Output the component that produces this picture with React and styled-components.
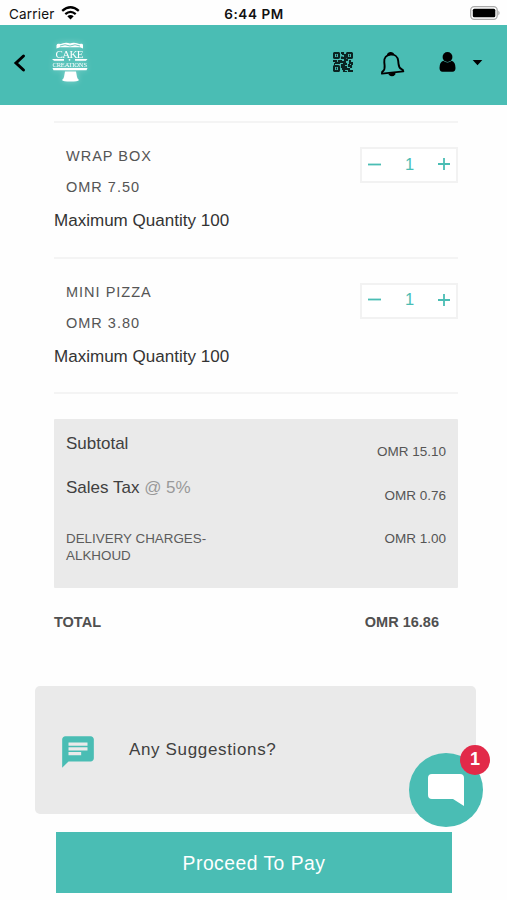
import React, { useState } from 'react'
import styled, { createGlobalStyle } from 'styled-components'
import { MdChat } from 'react-icons/md'

const teal = '#4abdb4'

const GlobalStyle = createGlobalStyle`
*{
  box-sizing:border-box;
}
body{
  margin:0;
  background-color:#fefefe;
  font-family:"Liberation Sans", Arial, sans-serif;
  overflow:hidden;
}
button{
  font-family:inherit;
  border:0;
  padding:0;
  background:none;
}
`
const Screen = styled.div`
display:flex;
flex-direction:column;
width:507px;
height:900px;
overflow:hidden;
`
const StatusBar = styled.div`
display:grid;
grid-template-columns:1fr auto 1fr;
align-items:center;
height:25px;
padding:2px 6px 0 9px;
font-family:Inter, sans-serif;
font-size:13.5px;
color:#111;
`
const Carrier = styled.div`
display:flex;
align-items:center;
gap:6px;
letter-spacing:.2px;
svg{
  margin-top:-2px;
}
`
const Clock = styled.div`
margin-right:2px;
font-weight:600;
letter-spacing:.6px;
`
const Battery = styled.svg`
justify-self:end;
margin-top:-1px;
`
const StyledHeader = styled.header`
display:flex;
align-items:center;
height:80px;
padding:0 24px 4px 13px;
background-color:${teal};
`
const Logo = styled.svg`
margin-left:24px;
margin-right:auto;
overflow:visible;
filter:drop-shadow(0 0 3px rgba(255, 255, 255, .35));
`
const HeaderIcons = styled.div`
display:flex;
align-items:center;
`
const QrIcon = styled.svg`
margin-right:26px;
margin-top:-2px;
`
const BellIcon = styled.svg`
margin-right:34px;
margin-top:3px;
`
const UserIcon = styled.svg`
margin-right:16px;
margin-top:-2px;
`
const Content = styled.main`
width:404px;
margin:16px 0 0 54px;
`
const Item = styled.section`
display:grid;
grid-template-columns:1fr 98px;
height:135.5px;
border-top:2px solid #f4f4f4;
padding-top:24px;
`
const ItemText = styled.div`
display:flex;
flex-direction:column;
margin-top:-1px;
`
const ItemLine = styled.span`
height:31px;
padding-left:12px;
font-size:14.5px;
line-height:20px;
letter-spacing:1px;
color:#555;
`
const MaxQuantity = styled.span`
margin-top:2px;
font-size:17.05px;
line-height:22px;
color:#333;
`
const Stepper = styled.div`
display:flex;
align-items:center;
justify-content:space-between;
height:36px;
padding:0 6px 2px;
border:2px solid #f2f2f2;
background:#fff;
font-size:16.5px;
color:${teal};
button{
  display:flex;
}
`
const Summary = styled.section`
height:195.5px;
padding-top:25px;
border-top:2px solid #f4f4f4;
`
const SummaryBox = styled.div`
height:169px;
padding:14px 12px 0;
background-color:#eaeaea;
border-radius:1px;
`
const SummaryRow = styled.div`
display:flex;
justify-content:space-between;
height:${props => props.$height}px;
`
const Label = styled.span`
font-size:17px;
line-height:22px;
color:#404040;
small{
  font-size:17px;
  color:#999;
}
`
const ChargeLabel = styled.span`
width:150px;
padding-top:9px;
font-size:13.4px;
line-height:17px;
color:#5c5c5c;
`
const Price = styled.span`
padding-top:${props => props.$top}px;
font-size:13.5px;
line-height:17px;
color:#555;
`
const Total = styled.div`
display:flex;
justify-content:space-between;
padding:25px 19px 0 0;
font-size:14.5px;
line-height:18px;
font-weight:bold;
color:#505050;
`
const Suggestions = styled.section`
display:flex;
align-items:center;
width:441px;
height:128px;
margin:55px 0 0 35px;
padding-left:24px;
border-radius:5px;
background-color:#eaeaea;
font-size:17px;
letter-spacing:.65px;
color:#404040;
svg{
  margin-top:5px;
  margin-right:32px;
}
`
const PayButton = styled.button`
flex-shrink:0;
width:396px;
height:61px;
margin:18.5px 0 0 56px;
padding-top:2px;
background-color:${teal};
color:#fff;
font-size:19.3px;
letter-spacing:.5px;
`
const ChatButton = styled.button`
position:absolute;
left:409px;
top:753px;
width:74px;
height:74px;
border-radius:50%;
background-color:${teal};
`
const ChatBadge = styled.span`
position:absolute;
right:-7px;
top:-8px;
width:30px;
height:30px;
border-radius:50%;
background-color:#e22a49;
color:#fff;
font-size:18px;
line-height:29px;
font-weight:bold;
text-align:center;
`

const items = [
  { name: 'WRAP BOX', price: 'OMR 7.50' },
  { name: 'MINI PIZZA', price: 'OMR 3.80' },
]

const CartItem = ({ name, price }) => {
  const [count, setCount] = useState(1)

  return (
    <Item>
      <ItemText>
        <ItemLine>{name}</ItemLine>
        <ItemLine>{price}</ItemLine>
        <MaxQuantity>Maximum Quantity 100</MaxQuantity>
      </ItemText>
      <Stepper>
        <button aria-label="Remove one" onClick={() => setCount(Math.max(0, count - 1))}>
          <svg width="13" height="13" stroke={teal} strokeWidth="1.8">
            <path d="M0 6.5H13" />
          </svg>
        </button>
        <span>{count}</span>
        <button aria-label="Add one" onClick={() => setCount(Math.min(100, count + 1))}>
          <svg width="12" height="12" stroke={teal} strokeWidth="1.8">
            <path d="M0 6H12M6 0V12" />
          </svg>
        </button>
      </Stepper>
    </Item>
  )
}

const CakeLogo = () => (
  <Logo width="38" height="42" viewBox="0 0 38 42" fill="#fff">
    <path d="M5.500 6.500V3.200Q6 1.500 8 1.800Q10 2.200 12 1.300Q15.500 0 19 1.600Q22.500 0 26 1.300Q28 2.200 30 1.800Q32 1.500 32 3.200V6.500L29 5.300H9Z" />
    <path d="M9 4Q14 1.500 19 4Q24 1.500 29 4" fill="none" stroke={teal} strokeWidth=".8" />
    <text x="4.500" y="15.800" fontFamily="Liberation Serif, serif" fontSize="11" textLength="28">CAKE</text>
    <path d="M1 17H13V18.800H3ZM24 17H36.500L35 18.800H24Z" />
    <circle cx="18.500" cy="17.800" r=".9" />
    <text x="1.500" y="25" fontFamily="Liberation Serif, serif" fontSize="6.500" textLength="34.500">CREATIONS</text>
    <path d="M1.500 26H36.500L35.500 28.200H2.500Z" />
    <path d="M14 29.500H25L26 35Q26.500 37 28 38Q27 39.500 19.500 39.500Q12 39.500 11 38Q12.500 37 13 35Z" />
  </Logo>
)

export default function App() {
  return (
    <Screen>
      <GlobalStyle />
      <StatusBar>
        <Carrier>
          Carrier
          <svg width="19" height="14" viewBox="0 0 19 14" fill="none" stroke="#000" strokeWidth="2.300">
            <path d="M1.200 4.900Q9.500 -2.400 17.800 4.900M4.300 8.100Q9.500 3.700 14.700 8.100" />
            <path d="M9.500 13.500L6.300 10.200Q9.500 7.600 12.700 10.200Z" fill="#000" stroke="none" />
          </svg>
        </Carrier>
        <Clock>6:44 PM</Clock>
        <Battery width="31" height="14" viewBox="0 0 31 14">
          <rect x=".7" y=".7" width="26.500" height="12.600" rx="3.500" fill="#fff" stroke="#aaa" strokeWidth="1.300" />
          <rect x="2.800" y="2.700" width="22.500" height="8.600" rx="1.500" />
          <path d="M28.300 4.500Q31 7 28.300 9.500Z" fill="#aaa" />
        </Battery>
      </StatusBar>
      <StyledHeader>
        <svg width="14" height="20" viewBox="0 0 14 20" fill="none" stroke="#000" strokeWidth="3" strokeLinecap="round">
          <path d="M10.500 3L3 10L10.500 17" />
        </svg>
        <CakeLogo />
        <HeaderIcons>
          <QrIcon width="20" height="20" viewBox="0 0 20 20" fill="none" stroke="#0b2422" strokeWidth="2.100">
            <rect x="1" y="1" width="5" height="5" rx=".7" />
            <rect x="14" y="1" width="5" height="5" rx=".7" />
            <rect x="1" y="14" width="5" height="5" rx=".7" />
            <path d="M3 3.500H4M16 3.500H17M3 16.500H4" />
            <path d="M8 1H10V3M12 2V6H9V4.500M0 9H3V11H6V9H8M8 8V10H12V8H15M17 8V11H20M1 12H2M9 12V15H11V12H14M9 17H11V20M13 14V17H16V19H20M16 12V14H18V16M13 19V20M18 12H20" />
          </QrIcon>
          <BellIcon width="26" height="27" viewBox="0 0 26 27" fill="none" stroke="#000" strokeWidth="1.900" strokeLinejoin="round">
            <g transform="rotate(-6 13 13)">
              <path d="M2 21.500Q2 19.800 3.300 19.200Q5.500 17.700 5.500 13.500V10.500C5.500 6 8.500 3.500 12.500 3.500S19.500 6 19.500 10.500V13.500Q19.500 17.700 22 19.200Q23.500 19.800 23.500 21.500Z" />
              <path d="M10 3Q12.500 .5 15 3ZM9.500 23Q12 25.500 14.500 23Z" fill="#000" />
            </g>
          </BellIcon>
          <UserIcon width="17" height="20" viewBox="0 0 17 20">
            <circle cx="8.500" cy="5" r="4.900" />
            <path d="M4.300 8.700Q8.500 12.300 12.700 8.700Q16.500 10 16.500 16Q16.500 19.700 13.500 19.700H3.500Q.5 19.700 .5 16Q.5 10 4.300 8.700Z" />
          </UserIcon>
          <svg width="11" height="6" viewBox="0 0 11 6">
            <path d="M.7 0H10.300L5.500 5.300Z" />
          </svg>
        </HeaderIcons>
      </StyledHeader>

      <Content>
        {items.map(item => <CartItem key={item.name} {...item} />)}
        <Summary>
          <SummaryBox>
            <SummaryRow $height={44}>
              <Label>Subtotal</Label>
              <Price $top={10}>OMR 15.10</Price>
            </SummaryRow>
            <SummaryRow $height={44}>
              <Label>Sales Tax <small>@ 5%</small></Label>
              <Price $top={10}>OMR 0.76</Price>
            </SummaryRow>
            <SummaryRow $height={44}>
              <ChargeLabel>DELIVERY CHARGES-ALKHOUD</ChargeLabel>
              <Price $top={9}>OMR 1.00</Price>
            </SummaryRow>
          </SummaryBox>
        </Summary>
        <Total>
          <span>TOTAL</span>
          <span>OMR 16.86</span>
        </Total>
      </Content>

      <Suggestions>
        <MdChat size={38} color={teal} />
        Any Suggestions?
      </Suggestions>
      <PayButton>Proceed To Pay</PayButton>

      <ChatButton aria-label="Open chat">
        <svg width="74" height="74" viewBox="0 0 74 74" fill="#fff">
          <path d="M23 21H51Q55 21 55 25V53L44 46H23Q19 46 19 42V25Q19 21 23 21Z" />
        </svg>
        <ChatBadge>1</ChatBadge>
      </ChatButton>
    </Screen>
  )
}
